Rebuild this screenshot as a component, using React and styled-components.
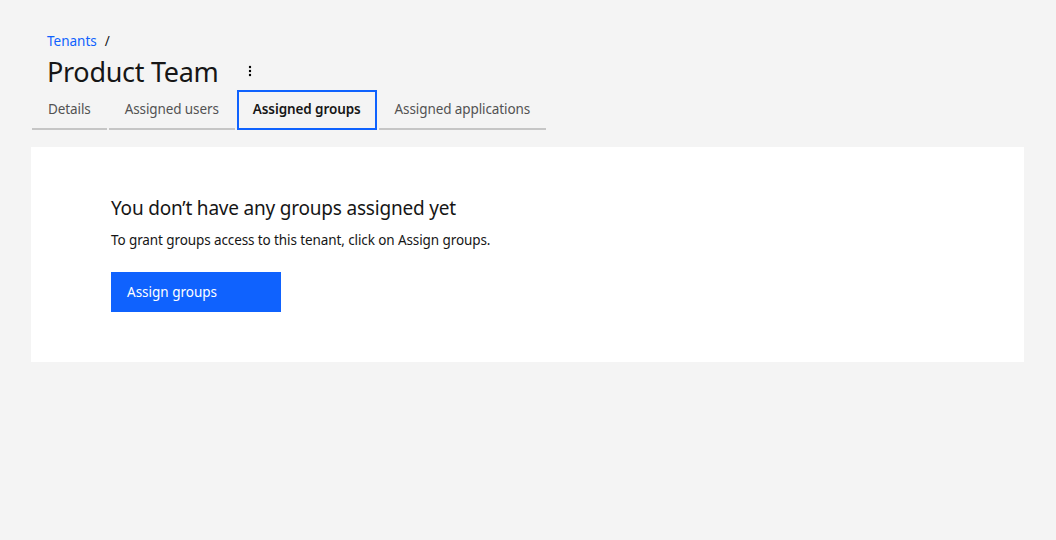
import React from "react";
import styled, { createGlobalStyle } from "styled-components";

const Global = createGlobalStyle`
  html, body { margin: 0; background: #f4f4f4; font-family: "Noto Sans", "Open Sans", sans-serif; color: #161616; }
`;

const Page = styled.div`
  padding: 30px 32px 0 31px;
`;
const Crumb = styled.div`
  font-size: 13.5px; display: flex; gap: 8px; padding-left: 16px; height: 22px; align-items: center;
  a { color: #0f62fe; text-decoration: none; }
`;
const TitleRow = styled.div`
  display: flex; align-items: center; gap: 24px; padding-left: 16px; height: 38px;
`;
const Title = styled.h1`
  margin: 0; font-size: 27px; font-weight: 400; letter-spacing: -0.3px;
`;
const Tabs = styled.div`
  display: flex; gap: 2px; margin-left: 1px;
`;
const Tab = styled.div`
  height: 40px; box-sizing: border-box; padding: 0 16px; display: flex; align-items: center;
  font-size: 13.5px; letter-spacing: -0.1px; color: ${p => p.$active ? "#161616" : "#525252"}; font-weight: ${p => p.$active ? 600 : 400};
  border-bottom: 2px solid #c6c6c6;
  ${p => p.$active && "outline: 2px solid #0f62fe; outline-offset: -2px; border-bottom-color: transparent;"}
`;
const Card = styled.div`
  background: #fff; margin-top: 17px; width: 993px; height: 215px; box-sizing: border-box;
  padding: 48px 80px;
`;
const H = styled.h2`margin: 0 0 10px; font-size: 19px; font-weight: 400; letter-spacing: -0.2px;`;
const P = styled.p`margin: 0 0 23px; font-size: 13.5px; letter-spacing: -0.1px;`;
const Button = styled.button`
  width: 170px; height: 40px; background: #0f62fe; color: #fff; border: none; text-align: left;
  padding: 0 16px; font: inherit; font-size: 13.5px;
`;

export default function App() {
  return (
    <Page>
      <Global />
      <Crumb><a href="#">Tenants</a><span>/</span></Crumb>
      <TitleRow>
        <Title>Product Team</Title>
        <svg width="16" height="16" viewBox="0 0 16 16"><circle cx="8" cy="4" r="1.2"/><circle cx="8" cy="8" r="1.2"/><circle cx="8" cy="12" r="1.2"/></svg>
      </TitleRow>
      <Tabs>
        <Tab>Details</Tab>
        <Tab>Assigned users</Tab>
        <Tab $active>Assigned groups</Tab>
        <Tab>Assigned applications</Tab>
      </Tabs>
      <Card>
        <H>You don’t have any groups assigned yet</H>
        <P>To grant groups access to this tenant, click on Assign groups.</P>
        <Button>Assign groups</Button>
      </Card>
    </Page>
  );
}
